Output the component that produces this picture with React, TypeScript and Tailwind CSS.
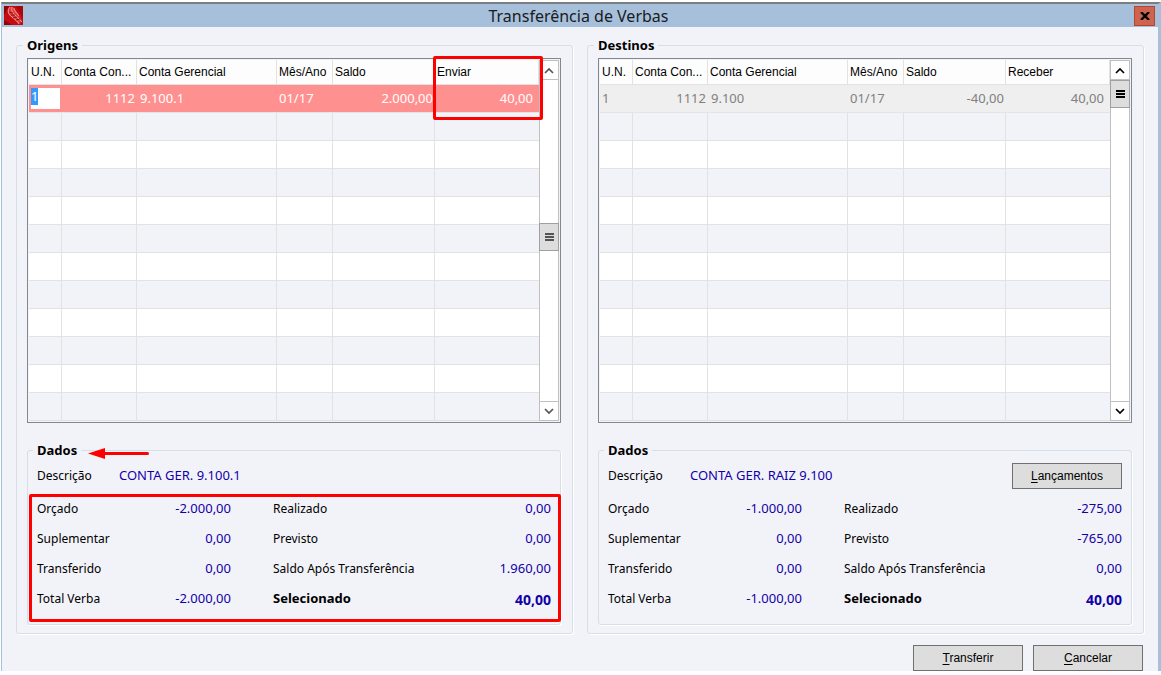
import React, { useEffect, useRef } from "react";

interface Entry {
  un: string;
  conta: string;
  gerencial: string;
  mes: string;
  saldo: string;
  valor: string;
}

interface Summary {
  descricao: string;
  left: [string, string][];
  right: [string, string][];
  selecionado: string;
}

const EMPTY_ROWS = 11;

const Mnemonic: React.FC<{ text: string }> = ({ text }) => (
  <>
    <span className="underline underline-offset-2">{text[0]}</span>
    {text.slice(1)}
  </>
);

const PushButton: React.FC<{ text: string }> = ({ text }) => (
  <button
    type="button"
    className="h-[26px] w-[110px] border border-[#707070] bg-[#dddddd] font-['Liberation_Sans'] text-[12px] text-black"
  >
    <Mnemonic text={text} />
  </button>
);

const AppIcon = () => (
  <svg width="19" height="19" viewBox="0 0 19 19" aria-hidden="true">
    <rect width="19" height="19" fill="#c40d12" />
    <path d="M0 0h5L0 9zM0 19v-5l8 5z" fill="#8e0508" />
    <path d="M12 0h7v12z" fill="#a8080c" />
    <path d="M6 1C3 3 3 8 7 11l8 7 3-3-5-9-4-5z" fill="#e03a38" />
    <path d="M6 1C3 4 4 8 8 11s6 5 7 7M8 1c-1 4 1 6 4 9s4 4 6 6M10 2c0 3 3 5 5 8" stroke="#f7b3ac" strokeWidth="0.8" fill="none" />
    <path d="M5 6l4 1M7 9l4 0M9 12l4-1M12 14l4-1" stroke="#7c0508" strokeWidth="0.8" fill="none" />
  </svg>
);

const Chevron: React.FC<{ down?: boolean }> = ({ down }) => (
  <svg width="10" height="7" viewBox="0 0 10 7" fill="none" stroke="currentColor" strokeWidth="1.7" aria-hidden="true">
    <path d={down ? "M1 1l4 4 4-4" : "M1 6l4-4 4 4"} />
  </svg>
);

const ScrollBar: React.FC<{ active?: boolean }> = ({ active }) => (
  <div
    className={`flex w-5 shrink-0 flex-col border border-[#c0c0c0] bg-white ${
      active ? "text-black" : "text-[#555555]"
    }`}
  >
    <button
      type="button"
      aria-label="Rolar para cima"
      className="flex h-[19px] items-center justify-center border-b border-[#c0c0c0]"
    >
      <Chevron />
    </button>
    <div className={active ? "flex-none" : "h-[143px] flex-none"} />
    <div className="-mx-px flex h-7 items-center justify-center border border-[#a0a0a0] bg-[#dddddd]">
      <svg width="9" height="8" viewBox="0 0 9 8" fill="currentColor" aria-hidden="true">
        <path d="M0 0h9v2H0zM0 3h9v2H0zM0 6h9v2H0z" />
      </svg>
    </div>
    <div className="flex-1" />
    <button
      type="button"
      aria-label="Rolar para baixo"
      className="flex h-[19px] items-center justify-center border-t border-[#c0c0c0]"
    >
      <Chevron down />
    </button>
  </div>
);

const UnitInput: React.FC<{ value: string }> = ({ value }) => {
  const ref = useRef<HTMLInputElement>(null);

  // Start editing with the whole value selected
  useEffect(() => {
    ref.current?.focus();
    ref.current?.select();
  }, []);

  return (
    <input
      ref={ref}
      aria-label="U.N."
      defaultValue={value}
      className="block h-[21px] w-[29px] bg-white pb-[5px] text-black outline-none selection:bg-[#3399ff] selection:text-white"
    />
  );
};

const BudgetGrid: React.FC<{ entry: Entry; amountLabel: string; editing?: boolean }> = ({
  entry,
  amountLabel,
  editing,
}) => {
  const headers = ["U.N.", "Conta Con...", "Conta Gerencial", "Mês/Ano", "Saldo", amountLabel];

  return (
    <div className="relative flex border border-[#828790] bg-[#f2f3f9] p-px">
      <table className="w-full table-fixed border-separate border-spacing-0">
        <colgroup>
          <col className="w-[33px]" />
          <col className="w-[75px]" />
          <col className="w-[140px]" />
          <col className="w-[56px]" />
          <col className="w-[102px]" />
          <col />
        </colgroup>
        <thead>
          <tr className="h-[25px] bg-[#fdfdfd] text-left font-['Liberation_Sans'] text-[12px]">
            {headers.map((header) => (
              <th
                key={header}
                className="border-r border-b border-[#e2e2e2] p-0 pl-[2px] font-normal whitespace-nowrap"
              >
                {header}
              </th>
            ))}
          </tr>
        </thead>
        <tbody>
          <tr
            className={`h-[28px] text-[13px] ${
              editing ? "bg-[#ff9090] text-white" : "bg-[#efefef] text-[#808080]"
            }`}
          >
            <td className="border-b border-[#e4e4e4] p-0 pl-[2px]">
              {editing ? <UnitInput value={entry.un} /> : entry.un}
            </td>
            <td className="border-b border-[#e4e4e4] p-0 pr-[2px] text-right">{entry.conta}</td>
            <td className="border-b border-[#e4e4e4] p-0 pl-[3px]">{entry.gerencial}</td>
            <td className="border-b border-[#e4e4e4] p-0 pl-[2px]">{entry.mes}</td>
            <td className="border-b border-[#e4e4e4] p-0 pr-[2px] text-right">{entry.saldo}</td>
            <td className="border-b border-[#e4e4e4] p-0 pr-[6px] text-right">{entry.valor}</td>
          </tr>
          {Array.from({ length: EMPTY_ROWS }, (_, row) => (
            <tr key={row} className="h-[28px] even:bg-[#f2f3f9] odd:bg-white">
              {headers.map((header) => (
                <td
                  key={header}
                  className="border-r border-b border-[#e2e2e2] p-0 last:border-r-0"
                />
              ))}
            </tr>
          ))}
        </tbody>
      </table>
      <ScrollBar active={!editing} />
      {editing && (
        <div className="pointer-events-none absolute -top-[3px] right-[17px] h-[64px] w-[110px] rounded-xs border-3 border-[#ff0000]" />
      )}
    </div>
  );
};

const Field: React.FC<{ label: string; value: string }> = ({ label, value }) => (
  <div className="flex h-[30px] items-center justify-between">
    <dt className="text-[12px] text-black">{label}</dt>
    <dd className="text-[13px] text-[#1200a8]">{value}</dd>
  </div>
);

const TotalField: React.FC<{ label: string; value: string }> = ({ label, value }) => (
  <div className="flex h-[30px] items-center justify-between font-bold">
    <dt className="text-[13px] text-black">{label}</dt>
    <dd className="text-[14px] text-[#1200a8]">{value}</dd>
  </div>
);

const SummaryBox: React.FC<{ summary: Summary; marked?: boolean; action?: React.ReactNode }> = ({
  summary,
  marked,
  action,
}) => (
  <fieldset className="relative mt-[19px] min-w-0 rounded-[3px] border border-[#d5dfe5] px-[9px] pt-[5px] pb-[10px] shadow-[1px_1px_0_#ffffff]">
    <legend className="-ml-1 px-1 text-[13px] leading-4 font-bold">Dados</legend>
    {marked && (
      <svg
        className="absolute -top-[10px] left-[60px]"
        width="61"
        height="11"
        viewBox="0 0 61 11"
        aria-hidden="true"
      >
        <path d="M0 5.500L17 0v11z" fill="#ff0000" />
        <path d="M15 5.500H59.500" stroke="#ff0000" strokeWidth="3" strokeLinecap="round" />
      </svg>
    )}
    <div className="flex h-[26px] items-center">
      <span className="w-[82px] text-[12px]">Descrição</span>
      <span className="flex-1 text-[13px] text-[#1200a8]">{summary.descricao}</span>
      {action}
    </div>
    <div className="relative mt-[5px] flex gap-[42px]">
      <dl className="w-[194px]">
        {summary.left.map(([label, value]) => (
          <Field key={label} label={label} value={value} />
        ))}
      </dl>
      <dl className="flex-1">
        {summary.right.map(([label, value]) => (
          <Field key={label} label={label} value={value} />
        ))}
        <TotalField label="Selecionado" value={summary.selecionado} />
      </dl>
      {marked && (
        <div className="pointer-events-none absolute top-0 -right-[10px] -bottom-[8px] -left-[8px] rounded-xs border-3 border-[#ff0000]" />
      )}
    </div>
  </fieldset>
);

const Panel: React.FC<{ title: string; children: React.ReactNode }> = ({ title, children }) => (
  <fieldset className="min-w-0 rounded-[3px] border border-[#d5dfe5] pt-[5px] pr-[11px] pb-[8px] pl-[10px] shadow-[1px_1px_0_#ffffff]">
    <legend className="-ml-1 px-1 text-[13px] leading-4 font-bold">{title}</legend>
    {children}
  </fieldset>
);

const origem: Entry = {
  un: "1",
  conta: "1112",
  gerencial: "9.100.1",
  mes: "01/17",
  saldo: "2.000,00",
  valor: "40,00",
};

const destino: Entry = {
  un: "1",
  conta: "1112",
  gerencial: "9.100",
  mes: "01/17",
  saldo: "-40,00",
  valor: "40,00",
};

const origemSummary: Summary = {
  descricao: "CONTA GER. 9.100.1",
  left: [
    ["Orçado", "-2.000,00"],
    ["Suplementar", "0,00"],
    ["Transferido", "0,00"],
    ["Total Verba", "-2.000,00"],
  ],
  right: [
    ["Realizado", "0,00"],
    ["Previsto", "0,00"],
    ["Saldo Após Transferência", "1.960,00"],
  ],
  selecionado: "40,00",
};

const destinoSummary: Summary = {
  descricao: "CONTA GER. RAIZ 9.100",
  left: [
    ["Orçado", "-1.000,00"],
    ["Suplementar", "0,00"],
    ["Transferido", "0,00"],
    ["Total Verba", "-1.000,00"],
  ],
  right: [
    ["Realizado", "-275,00"],
    ["Previsto", "-765,00"],
    ["Saldo Após Transferência", "0,00"],
  ],
  selecionado: "40,00",
};

export default function App() {
  return (
    <div className="bg-white pt-[2px] pl-px font-['Noto_Sans',sans-serif] text-black">
      <div className="border-t-2 border-r-3 border-l border-t-[#7b7d80] border-r-[#a6c0dc] border-l-[#a6c0dc] bg-[#f2f3f9]">
        <header className="flex h-[23px] items-center bg-[#a6c0dc] pr-[3px] pl-[2px]">
          <AppIcon />
          <h1 className="flex-1 text-center text-[16px] leading-5 text-[#1b1b1b]">
            Transferência de Verbas
          </h1>
          <button
            type="button"
            aria-label="Fechar"
            className="flex h-5 w-[21px] items-center justify-center border border-[#b8432f] bg-[#cd6450]"
          >
            <svg width="10" height="8" viewBox="0 0 10 8" stroke="#000000" strokeWidth="2.400" aria-hidden="true">
              <path d="M1 0l8 8M9 0L1 8" />
            </svg>
          </button>
        </header>

        <main className="grid grid-cols-2 gap-[14px] px-[14px] pt-[10px]">
          <Panel title="Origens">
            <BudgetGrid entry={origem} amountLabel="Enviar" editing />
            <SummaryBox summary={origemSummary} marked />
          </Panel>
          <Panel title="Destinos">
            <BudgetGrid entry={destino} amountLabel="Receber" />
            <SummaryBox summary={destinoSummary} action={<PushButton text="Lançamentos" />} />
          </Panel>
        </main>

        <footer className="flex justify-end gap-[10px] px-[15px] pt-[11px]">
          <PushButton text="Transferir" />
          <PushButton text="Cancelar" />
        </footer>
      </div>
    </div>
  );
}
